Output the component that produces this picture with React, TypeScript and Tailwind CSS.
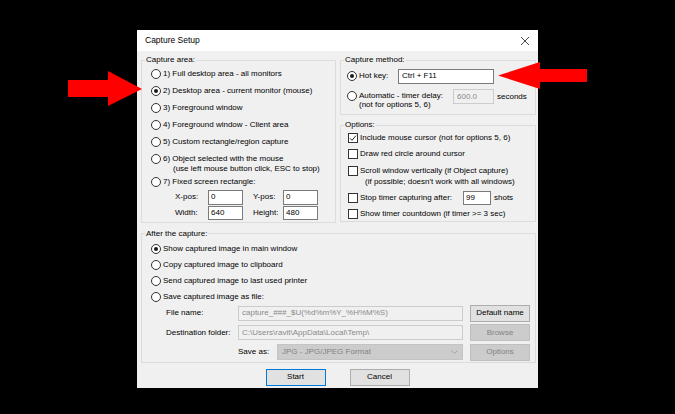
import React from "react";

// ─── Small Win32-style controls ─────────────────────────────────────────────
const Radio: React.FC<{ checked?: boolean }> = ({ checked }) => (
  <span className="flex h-[10px] w-[10px] shrink-0 items-center justify-center rounded-full border border-[#333] bg-white">
    {checked && <span className="h-[4px] w-[4px] rounded-full bg-[#1a1a1a]" />}
  </span>
);

const Check: React.FC<{ checked?: boolean }> = ({ checked }) => (
  <span className="flex h-[10px] w-[10px] shrink-0 items-center justify-center border border-[#333] bg-white">
    {checked && (
      <svg width="8" height="8" viewBox="0 0 8 8">
        <path d="M1 4.3 L3 6.3 L7 1.6" stroke="#222" strokeWidth="1" fill="none" />
      </svg>
    )}
  </span>
);

const Field: React.FC<{ className?: string; children?: React.ReactNode }> = ({ className = "", children }) => (
  <div className={`flex items-center border border-[#7a7a7a] bg-white pl-[2px] text-black ${className}`}>{children}</div>
);

const Disabled: React.FC<{ className?: string; children?: React.ReactNode }> = ({ className = "", children }) => (
  <div className={`flex items-center border border-[#cccccc] bg-[#f0f0f0] pl-[3px] text-[#8a8a8a] ${className}`}>{children}</div>
);

const Button: React.FC<{ disabled?: boolean; focused?: boolean; children: React.ReactNode }> = ({
  disabled,
  focused,
  children,
}) => (
  <div
    className={`flex h-[17px] w-[60px] items-center justify-center border ${
      disabled
        ? "border-[#bfbfbf] bg-[#cccccc] text-[#838383]"
        : focused
        ? "border-[#0078d7] bg-[#e1e1e1] text-black"
        : "border-[#adadad] bg-[#e1e1e1] text-black"
    }`}
  >
    {children}
  </div>
);

const Group: React.FC<{ label: string; className?: string; children: React.ReactNode }> = ({
  label,
  className = "",
  children,
}) => (
  <fieldset className={`border border-[#dcdcdc] ${className}`}>
    <legend className="ml-[3px] px-[1px] leading-[10px]">{label}</legend>
    {children}
  </fieldset>
);

const RadioRow: React.FC<{ checked?: boolean; h?: string; children: React.ReactNode }> = ({
  checked,
  h = "h-[17px]",
  children,
}) => (
  <div className={`flex ${h} items-center gap-[2px] pl-[9px]`}>
    <Radio checked={checked} />
    <span>{children}</span>
  </div>
);

// ─── Arrows drawn over the screenshot ───────────────────────────────────────
const LeftArrow = () => (
  <svg className="absolute left-[68px] top-[71px]" width="74" height="35" viewBox="0 0 74 35">
    <polygon points="0,9 40,9 40,0 74,18 40,35 40,26 0,26" fill="#ff0000" />
  </svg>
);

const RightArrow = () => (
  <svg className="absolute left-[498px] top-[62px]" width="89" height="27" viewBox="0 0 89 27">
    <polygon points="0,13.5 42,0 42,7 89,7 89,20 42,20 42,27" fill="#ff0000" />
  </svg>
);

export default function App() {
  return (
    <div className="relative h-[414px] w-[675px] overflow-hidden bg-black pt-[30px] font-['Liberation_Sans',Arial,sans-serif] text-[8px] text-black">
      <div className="mx-auto flex h-[358px] w-[401px] flex-col bg-[#f0f0f0]">
        {/* Title bar */}
        <div className="flex h-[21px] shrink-0 items-center justify-between bg-white pl-[8px] pr-[8px]">
          <span className="text-[8.5px]">Capture Setup</span>
          <svg width="10" height="10" viewBox="0 0 10 10">
            <path d="M1 1 L9 9 M9 1 L1 9" stroke="#333" strokeWidth="0.9" />
          </svg>
        </div>

        {/* Top row: capture area + right column */}
        <div className="mt-[4px] flex gap-[4px] pl-[4px]">
          <Group label="Capture area:" className="w-[195px] pb-[1px]">
            <RadioRow>1) Full desktop area - all monitors</RadioRow>
            <RadioRow checked>2) Desktop area - current monitor (mouse)</RadioRow>
            <RadioRow>3) Foreground window</RadioRow>
            <RadioRow>4) Foreground window - Client area</RadioRow>
            <RadioRow>5) Custom rectangle/region capture</RadioRow>
            <div className="flex h-[24px] items-start gap-[2px] pl-[9px] pt-[3.5px]">
              <Radio />
              <div className="leading-[10px]">
                <div>6) Object selected with the mouse</div>
                <div className="pl-[10px]">(use left mouse button click, ESC to stop)</div>
              </div>
            </div>
            <RadioRow h="h-[15px]">7) Fixed screen rectangle:</RadioRow>
            <div className="flex h-[16px] items-center pl-[33px]">
              <span className="w-[33px]">X-pos:</span>
              <Field className="h-[15px] w-[35px]">0</Field>
              <span className="ml-[10px] w-[30px]">Y-pos:</span>
              <Field className="h-[15px] w-[35px]">0</Field>
            </div>
            <div className="flex h-[16px] items-center pl-[33px]">
              <span className="w-[33px]">Width:</span>
              <Field className="h-[14px] w-[35px]">640</Field>
              <span className="ml-[10px] w-[30px]">Height:</span>
              <Field className="h-[14px] w-[35px]">480</Field>
            </div>
          </Group>

          <div className="flex w-[196px] flex-col">
            <Group label="Capture method:" className="pb-[4.5px]">
              <div className="mt-[3px] flex h-[16px] items-center pl-[6px]">
                <Radio checked />
                <span className="ml-[2px] w-[39px]">Hot key:</span>
                <Field className="h-[15px] w-[96px] pl-[3px]">Ctrl + F11</Field>
              </div>
              <div className="mt-[5px] flex items-start pl-[6px]">
                <div className="flex w-[106px] items-start gap-[2px] pt-[2px]">
                  <Radio />
                  <div className="leading-[9px]">
                    <div>Automatic - timer delay:</div>
                    <div>(not for options 5, 6)</div>
                  </div>
                </div>
                <Disabled className="h-[15px] w-[41px]">600.0</Disabled>
                <span className="ml-[3px] leading-[15px]">seconds</span>
              </div>
            </Group>

            <Group label="Options:" className="mt-[5.5px]">
              <div className="flex h-[16px] items-center gap-[2px] pl-[7px]">
                <Check checked />
                <span>Include mouse cursor (not for options 5, 6)</span>
              </div>
              <div className="flex h-[16px] items-center gap-[2px] pl-[7px]">
                <Check />
                <span>Draw red circle around cursor</span>
              </div>
              <div className="flex h-[28px] items-start gap-[2px] pl-[7px] pt-[4px]">
                <Check />
                <div className="leading-[10.5px]">
                  <div>Scroll window vertically (if Object capture)</div>
                  <div className="pl-[5px]">(if possible; doesn't work with all windows)</div>
                </div>
              </div>
              <div className="flex h-[16px] items-center pl-[7px]">
                <Check />
                <span className="ml-[2px] w-[103px]">Stop timer capturing after:</span>
                <Field className="h-[14px] w-[28px]">99</Field>
                <span className="ml-[3px]">shots</span>
              </div>
              <div className="flex h-[15px] items-center gap-[2px] pl-[7px]">
                <Check />
                <span>Show timer countdown (if timer &gt;= 3 sec)</span>
              </div>
            </Group>
          </div>
        </div>

        {/* After the capture */}
        <Group label="After the capture:" className="ml-[4px] mt-[5.5px] w-[395px] pb-[1.5px]">
          <div className="pt-[2px]">
            <RadioRow checked h="h-[16px]">Show captured image in main window</RadioRow>
            <RadioRow h="h-[16px]">Copy captured image to clipboard</RadioRow>
            <RadioRow h="h-[16px]">Send captured image to last used printer</RadioRow>
            <RadioRow h="h-[16px]">Save captured image as file:</RadioRow>
          </div>
          <div className="flex flex-col gap-[2.5px]">
            <div className="flex h-[17px] items-center pl-[24px]">
              <span className="w-[72px]">File name:</span>
              <Disabled className="h-[15px] w-[225px]">capture_###_$U(%d%m%Y_%H%M%S)</Disabled>
              <div className="ml-[7px]">
                <Button>Default name</Button>
              </div>
            </div>
            <div className="flex h-[17px] items-center pl-[24px]">
              <span className="w-[72px]">Destination folder:</span>
              <Disabled className="h-[15px] w-[225px]">C:\Users\ravit\AppData\Local\Temp\</Disabled>
              <div className="ml-[7px]">
                <Button disabled>Browse</Button>
              </div>
            </div>
            <div className="flex h-[17px] items-center pl-[96px]">
              <span className="w-[39px]">Save as:</span>
              <div className="flex h-[16px] w-[186px] items-center justify-between border border-[#c4c4c4] bg-[#cccccc] pl-[4px] pr-[4px] text-[#838383]">
                <span>JPG - JPG/JPEG Format</span>
                <svg width="7" height="4" viewBox="0 0 7 4">
                  <path d="M0.5 0.5 L3.5 3.5 L6.5 0.5" stroke="#9a9a9a" strokeWidth="0.8" fill="none" />
                </svg>
              </div>
              <div className="ml-[7px]">
                <Button disabled>Options</Button>
              </div>
            </div>
          </div>
        </Group>

        {/* Dialog buttons */}
        <div className="mt-[5.5px] flex justify-center gap-[24px]">
          <Button focused>Start</Button>
          <Button>Cancel</Button>
        </div>
      </div>

      <LeftArrow />
      <RightArrow />
    </div>
  );
}
